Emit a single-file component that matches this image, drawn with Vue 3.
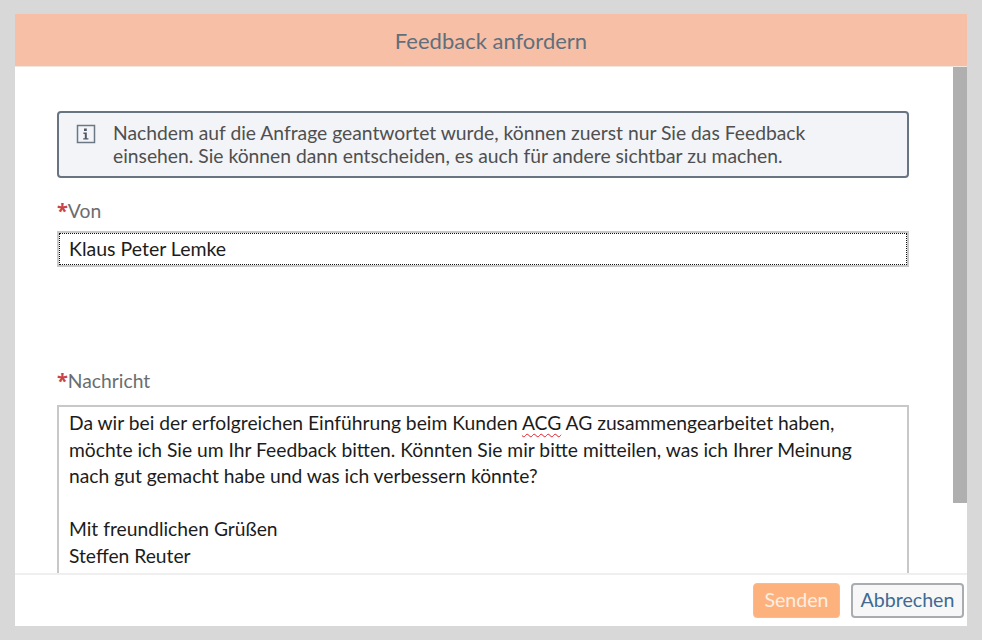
<script setup>
const info = ['Nachdem auf die Anfrage geantwortet wurde, können zuerst nur Sie das Feedback', 'einsehen. Sie können dann entscheiden, es auch für andere sichtbar zu machen.']
</script>

<template>
  <div class="page">
    <div class="dialog">
      <header class="head">Feedback anfordern</header>
      <div class="body">
        <main class="content">
          <div class="strip">
            <svg class="icon" width="20" height="20" viewBox="0 0 20 20">
              <rect x="1.5" y="1.5" width="17" height="17" fill="none" stroke="#6a7784" stroke-width="1.5" />
              <path d="M8 4.6h2.8v2.4H8zM7.4 8.6h3.4v5.6h1.6v1.4H7.2v-1.4h1.6V10H7.4z" fill="#4f5a65" />
            </svg>
            <div class="strip-text">
              <div v-for="l in info" :key="l">{{ l }}</div>
            </div>
          </div>
          <div class="label label-von"><span class="req">*</span>Von</div>
          <div class="input"><div class="focus">Klaus Peter Lemke</div></div>
          <div class="label label-msg"><span class="req">*</span>Nachricht</div>
          <div class="area">
            <div>Da wir bei der erfolgreichen Einführung beim Kunden <span class="wavy">ACG</span> AG zusammengearbeitet haben,</div>
            <div>möchte ich Sie um Ihr Feedback bitten. Könnten Sie mir bitte mitteilen, was ich Ihrer Meinung</div>
            <div>nach gut gemacht habe und was ich verbessern könnte?</div>
            <div class="blank"></div>
            <div>Mit freundlichen Grüßen</div>
            <div>Steffen Reuter</div>
          </div>
        </main>
        <div class="scroll"><div class="thumb"></div></div>
      </div>
      <footer class="foot">
        <button class="btn send">Senden</button>
        <button class="btn cancel">Abbrechen</button>
      </footer>
    </div>
  </div>
</template>

<style scoped>
.page {
  width: 982px;
  height: 640px;
  box-sizing: border-box;
  padding: 14px 15px;
  background: #d8d8d8;
  font-family: Lato, "Noto Sans", sans-serif;
}
.dialog {
  height: 612px;
  background: #fff;
  display: flex;
  flex-direction: column;
}
.head {
  height: 53px;
  flex: none;
  box-sizing: border-box;
  background: #f7bfa6;
  border-bottom: 1px solid #f0e6e0;
  display: flex;
  align-items: center;
  justify-content: center;
  font-size: 22px;
  color: #5f6f7c;
}
.body {
  flex: 1;
  min-height: 0;
  display: flex;
  overflow: hidden;
}
.content {
  flex: 1;
  min-width: 0;
  padding: 44px 44px 0 42px;
}
.scroll {
  width: 14px;
  flex: none;
}
.thumb {
  height: 436px;
  background: #afafaf;
}
.strip {
  height: 67px;
  box-sizing: border-box;
  border: 2px solid #68747f;
  border-radius: 4px;
  background: #f2f4f7;
  display: flex;
  align-items: center;
  padding-left: 17px;
  gap: 17px;
  color: #4f4f4f;
  font-size: 19.3px;
  line-height: 22.5px;
}
.icon { flex: none; margin-top: -22px; }
.strip-text { white-space: nowrap; }
.label {
  height: 24px;
  font-size: 19.3px;
  line-height: 24px;
  color: #6a6d70;
}
.label-von { margin-top: 21px; }
.label-msg { margin-top: 102px; }
.req {
  font-family: "Noto Sans", sans-serif;
  color: #c9434c;
  font-weight: 700;
  font-size: 20px;
  line-height: 0;
}
.input {
  margin-top: 8px;
  height: 36px;
  box-sizing: border-box;
  border: 2px solid #c8c8c8;
}
.focus {
  height: 100%;
  box-sizing: border-box;
  border: 1px dotted #111;
  padding-left: 9px;
  font-size: 19.5px;
  line-height: 29px;
  color: #1c1c1c;
}
.area {
  margin-top: 12px;
  height: 240px;
  box-sizing: border-box;
  border: 2px solid #c8c8c8;
  padding: 3px 0 0 10px;
  font-size: 19.25px;
  line-height: 26.6px;
  color: #1c1c1c;
  white-space: nowrap;
}
.blank { height: 26.6px; }
.wavy {
  text-decoration: underline wavy #e0202a 1.2px;
  text-underline-offset: 3px;
}
.foot {
  height: 53px;
  flex: none;
  box-sizing: border-box;
  border-top: 2px solid #efefef;
  display: flex;
  align-items: center;
  justify-content: flex-end;
  gap: 11px;
  padding-right: 3px;
}
.btn {
  height: 35px;
  box-sizing: border-box;
  border-radius: 4px;
  font-family: inherit;
  font-size: 19.6px;
  padding: 0 0 2px;
}
.send {
  width: 87px;
  background: #fdb27e;
  border: 1px solid #fbb98c;
  color: #fdeee2;
}
.cancel {
  width: 113px;
  background: #f7f7f7;
  border: 2px solid #a9adb1;
  color: #3f6a94;
}
</style>
